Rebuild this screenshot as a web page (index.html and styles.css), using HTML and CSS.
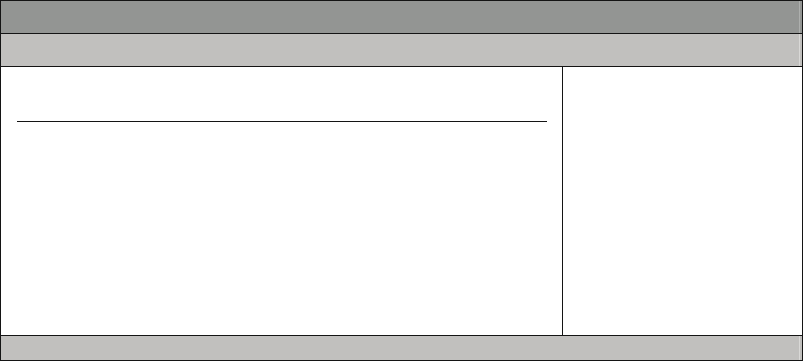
FILE: index.html
```html
<!DOCTYPE html>
<html>
<head>
<meta charset="utf-8">
<link rel="stylesheet" href="styles.css">
</head>
<body>
<div class="frame">
  <div class="bar bar-dark"></div>
  <div class="bar bar-light"></div>
  <div class="content">
    <div class="main"><div class="rule"></div></div>
    <div class="side"></div>
  </div>
  <div class="footer"></div>
</div>
</body>
</html>
```
FILE: styles.css
```css
html, body { margin: 0; padding: 0; background: #fff; }
.frame {
  width: 803px;
  height: 361px;
  box-sizing: border-box;
  border: 1px solid #141414;
  display: flex;
  flex-direction: column;
}
.bar { height: 32px; border-bottom: 1px solid #141414; flex: none; }
.bar-dark {
  background: linear-gradient(to left, #939593 0 2px, #adafad 2px 3px, #939593 3px);
}
.bar-light {
  background: linear-gradient(to left, #c1c0be 0 2px, #d9d8d6 2px 3px, #c1c0be 3px);
}
.content {
  height: 268px;
  flex: none;
  display: flex;
  border-bottom: 1px solid #141414;
  background: #fff;
}
.main {
  width: 562px;
  box-sizing: border-box;
  padding: 54px 15px 0 16px;
  border-right: 1px solid #141414;
}
.rule { height: 1px; background: #141414; }
.side { flex: 1; }
.footer {
  flex: 1;
  background: linear-gradient(to left, #c1c0be 0 2px, #d9d8d6 2px 3px, #c1c0be 3px);
}
```
